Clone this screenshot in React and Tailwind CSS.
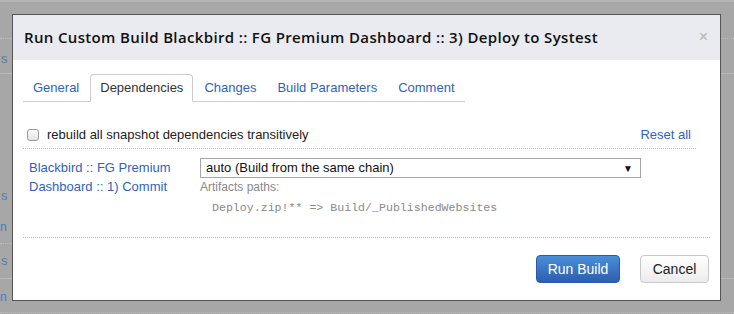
import React from "react";

export default function App() {
  const arial = { fontFamily: '"Liberation Sans", Arial, sans-serif' };
  return (
    <div className="relative w-[734px] h-[314px] overflow-hidden bg-[#a7a7a7]" style={arial}>
      {/* background page remnants */}
      <div className="h-[2px] bg-[#b4b4b4]" />
      <div className="absolute left-0 top-[38px] w-[734px] border-t border-dotted border-[#bdbdbd]" />
      <div className="absolute left-0 top-[73px] w-[12px] border-t border-[#b8b8b8]" />
      <div className="absolute left-[721px] top-[73px] w-[13px] border-t border-[#b8b8b8]" />
      <div className="absolute left-0 top-[243px] w-[12px] border-t border-dotted border-[#bdbdbd]" />
      <div className="absolute left-0 top-[278px] w-[734px] border-t border-[#b8b8b8]" />
      <div className="absolute left-0 top-[312px] w-[734px] border-t border-dotted border-[#bdbdbd]" />
      <div className="absolute left-[1px] top-[49px] text-[13px] text-[#5d78a8]">s</div>
      <div className="absolute left-[1px] top-[186px] text-[13px] text-[#5d78a8]">s</div>
      <div className="absolute left-[1px] top-[251px] text-[13px] text-[#5d78a8]">s</div>
      <div className="absolute left-0 top-[218px] text-[12px] text-[#3b82c8]">n</div>
      <div className="absolute left-0 top-[288px] text-[12px] text-[#3b82c8]">n</div>

      {/* dialog */}
      <div className="absolute left-[12px] top-[14px] w-[709px] h-[287px] bg-white border border-[#555] flex flex-col">
        <div className="h-[45px] bg-[#e9ebf0] flex items-center justify-between pl-[11px] pr-[12px] pb-[1px]">
          <div
            className="text-[15px] font-semibold text-[#111] tracking-[0.35px]"
            style={{ fontFamily: '"Open Sans", "DejaVu Sans", sans-serif' }}
          >
            Run Custom Build Blackbird :: FG Premium Dashboard :: 3) Deploy to Systest
          </div>
          <div className="text-[16px] text-[#b3b3b3] leading-none">×</div>
        </div>

        <div className="pl-[10px] pt-[14px]">
          <div className="inline-flex border-b border-[#cccccc] text-[13px]">
            <div className="px-[10px] h-[27px] flex items-center mr-[1px] text-[#2e62c0]">General</div>
            <div className="px-[9px] h-[28px] -mb-px flex items-center mr-[1px] text-[#333] bg-white border border-[#cccccc] border-b-white rounded-t-[4px]">
              Dependencies
            </div>
            <div className="px-[10px] h-[27px] flex items-center mr-[1px] text-[#2e62c0]">Changes</div>
            <div className="px-[10px] h-[27px] flex items-center mr-[1px] text-[#2e62c0]">Build Parameters</div>
            <div className="px-[10px] h-[27px] flex items-center text-[#2e62c0]">Comment</div>
          </div>
        </div>

        <div className="pl-[10px] w-[683px] mt-[24px]">
          <div className="flex items-center justify-between h-[18px] pl-[4px] pr-[5px]">
            <div className="flex items-center text-[13px] text-[#222]">
              <div className="w-[12px] h-[12px] border border-[#9a9a9a] rounded-[3px] bg-gradient-to-b from-[#fafafa] to-[#e4e4e4] mr-[8px]" />
              rebuild all snapshot dependencies transitively
            </div>
            <div className="text-[13px] text-[#2e62c0]">Reset all</div>
          </div>
          <div className="mt-[4px] border-t border-dotted border-[#bbbbbb]" />
          <div className="flex pt-[9px] pl-[6px]">
            <div className="w-[171px] text-[13px] leading-[19px] text-[#2e62c0]">
              Blackbird :: FG Premium
              <br />
              Dashboard :: 1) Commit
            </div>
            <div className="flex flex-col">
              <div className="w-[441px] h-[20px] border border-[#a6a6a6] flex items-center justify-between pl-[5px] pr-[7px] text-[13px] text-[#111]">
                <span>auto (Build from the same chain)</span>
                <span className="text-[10px] text-[#111]">▼</span>
              </div>
              <div className="text-[12px] text-[#888] mt-[2px] leading-[15px]">Artifacts paths:</div>
              <div
                className="text-[11.6px] text-[#8a8a8a] pl-[12px] mt-[5px] leading-[15px]"
                style={{ fontFamily: '"Liberation Mono", "Courier New", monospace' }}
              >
                Deploy.zip!** =&gt; Build/_PublishedWebsites
              </div>
            </div>
          </div>
        </div>

        <div className="ml-[10px] mr-[10px] mt-[22px] border-t border-dotted border-[#bbbbbb]" />
        <div className="flex justify-end gap-[20px] pr-[11px] pt-[17px]">
          <div className="w-[84px] h-[28px] rounded-[4px] border border-[#2a5ba6] bg-gradient-to-b from-[#4b8fd9] to-[#2b5fae] text-white text-[14px] flex items-center justify-center">
            Run Build
          </div>
          <div className="w-[69px] h-[28px] rounded-[4px] border border-[#c8c8c8] bg-gradient-to-b from-[#ffffff] to-[#ececec] text-[#222] text-[14px] flex items-center justify-center">
            Cancel
          </div>
        </div>
      </div>
    </div>
  );
}
